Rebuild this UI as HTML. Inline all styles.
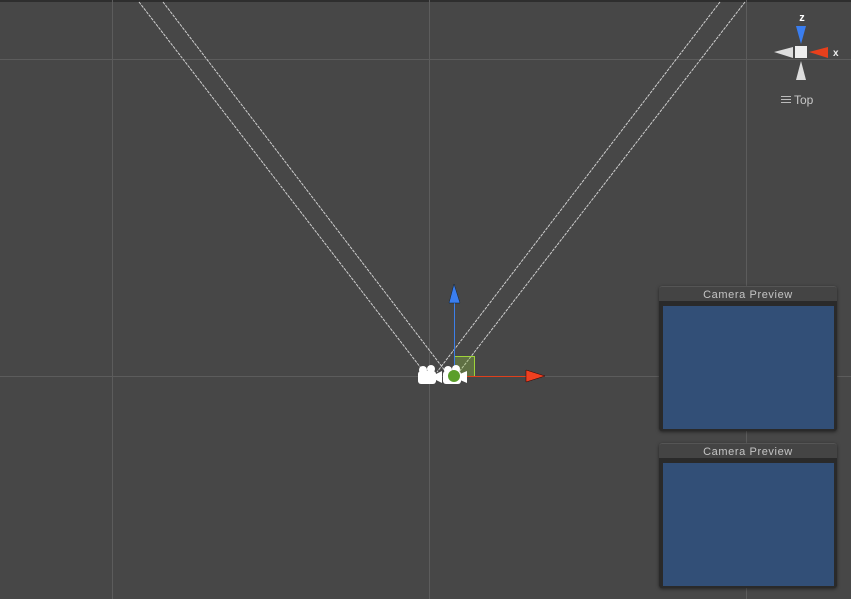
<!DOCTYPE html>
<html><head><meta charset="utf-8"><style>
body{margin:0;width:851px;height:599px;overflow:hidden;background:#474747;position:relative;font-family:"Liberation Sans",sans-serif}
.p{position:absolute;left:659px;width:178px;background:#2a2a2a;border-radius:3px;box-shadow:0 1px 3px rgba(0,0,0,.5)}
.h{height:14px;background:#444;border-radius:3px 3px 0 0;color:#c4c4c4;font-size:11px;text-align:center;line-height:16px;letter-spacing:.6px;border-top:1px solid #555}
.b{position:absolute;left:4px;right:3px;background:#324f77}
</style></head><body>
<svg width="851" height="599" style="position:absolute;left:0;top:0">
<rect x="0" y="0" width="851" height="2" fill="#2e2e2e"/>
<g stroke="#5c5c5c" stroke-width="1">
<line x1="112.5" y1="0" x2="112.5" y2="599"/><line x1="429.5" y1="0" x2="429.5" y2="599"/><line x1="746.5" y1="0" x2="746.5" y2="599"/>
<line x1="0" y1="59.5" x2="851" y2="59.5"/><line x1="0" y1="376.5" x2="851" y2="376.5"/>
</g>
<g stroke="#cfcfcf" stroke-width="1" stroke-dasharray="3,1" fill="none">
<line x1="139" y1="2" x2="424" y2="372"/><line x1="163" y1="2" x2="446" y2="372"/>
<line x1="720" y1="2" x2="437" y2="372"/><line x1="745" y1="2" x2="459" y2="372"/>
</g>
<rect x="454.5" y="356.5" width="20" height="20" fill="rgba(140,190,60,.35)" stroke="#9fd43a"/>
<line x1="454.5" y1="300" x2="454.5" y2="377" stroke="#3d7fe8"/>
<polygon points="454,284 449,303 460,303" fill="#3a7ef0" stroke="#123" stroke-width=".5"/>
<line x1="454" y1="376.5" x2="530" y2="376.5" stroke="#e0401c"/>
<polygon points="545,376 526,370 526,382" fill="#ef4020" stroke="#300" stroke-width=".5"/>
<g fill="#fff">
<rect x="418" y="371" width="18" height="13" rx="3"/><circle cx="423" cy="370" r="4"/><circle cx="431" cy="369" r="4"/><polygon points="436,374 442,371 442,383 436,380"/>
<rect x="443" y="371" width="18" height="13" rx="3"/><circle cx="448" cy="370" r="4"/><circle cx="456" cy="369" r="4"/><polygon points="460,374 467,371 467,383 460,380"/>
</g>
<circle cx="454" cy="376" r="6" fill="#5a9e2a"/>
<text x="802" y="21" fill="#fff" font-size="11" font-weight="bold" text-anchor="middle" font-family="Liberation Sans">z</text>
<polygon points="801,44 796,26 806,26" fill="#3a7ef0"/>
<polygon points="774,52 793,47 793,58" fill="#ddd"/>
<polygon points="809,52 828,47 828,58" fill="#e8401c"/>
<rect x="795" y="46" width="12" height="12" fill="#eee"/>
<polygon points="801,61 796,80 806,80" fill="#ddd"/>
<text x="833" y="56" fill="#eee" font-size="10" font-weight="bold" font-family="Liberation Sans">x</text>
<g stroke="#bbb"><line x1="781" y1="96.5" x2="791" y2="96.5"/><line x1="781" y1="99.5" x2="791" y2="99.5"/><line x1="781" y1="102.5" x2="791" y2="102.5"/></g>
<text x="794" y="104" fill="#c8c8c8" font-size="12" font-family="Liberation Sans">Top</text>
</svg>
<div class="p" style="top:286px;height:145px"><div class="h">Camera Preview</div><div class="b" style="top:20px;height:123px"></div></div>
<div class="p" style="top:443px;height:145px"><div class="h">Camera Preview</div><div class="b" style="top:20px;height:123px"></div></div>
</body></html>
